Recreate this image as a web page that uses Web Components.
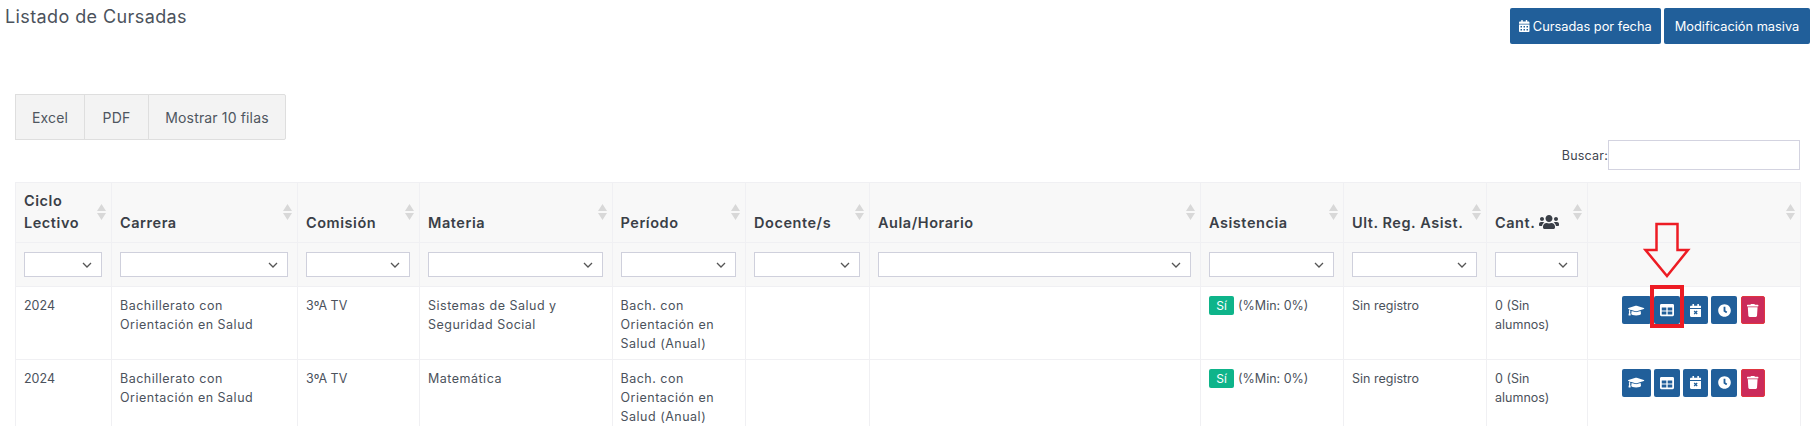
<!DOCTYPE html>
<html lang="es">
<head>
<meta charset="utf-8">
<title>Listado de Cursadas</title>
<style>
  html, body { margin: 0; background: #fff; }
  body { font-family: "Inter", "Open Sans", sans-serif; color: #495057; overflow: hidden; height: 426px; }
</style>
</head>
<body>
<cursadas-page></cursadas-page>

<script>
const ICONS = {
  calendar: '<svg viewBox="0 0 448 512"><path fill="currentColor" d="M0 464c0 26.500 21.500 48 48 48h352c26.500 0 48-21.500 48-48V192H0v272zm320-196c0-6.600 5.400-12 12-12h40c6.600 0 12 5.400 12 12v40c0 6.600-5.400 12-12 12h-40c-6.600 0-12-5.400-12-12v-40zm0 128c0-6.600 5.400-12 12-12h40c6.600 0 12 5.400 12 12v40c0 6.600-5.400 12-12 12h-40c-6.600 0-12-5.400-12-12v-40zM192 268c0-6.600 5.400-12 12-12h40c6.600 0 12 5.400 12 12v40c0 6.600-5.400 12-12 12h-40c-6.600 0-12-5.400-12-12v-40zm0 128c0-6.600 5.400-12 12-12h40c6.600 0 12 5.400 12 12v40c0 6.600-5.400 12-12 12h-40c-6.600 0-12-5.400-12-12v-40zM64 268c0-6.600 5.400-12 12-12h40c6.600 0 12 5.400 12 12v40c0 6.600-5.400 12-12 12H76c-6.600 0-12-5.400-12-12v-40zm0 128c0-6.600 5.400-12 12-12h40c6.600 0 12 5.400 12 12v40c0 6.600-5.400 12-12 12H76c-6.600 0-12-5.400-12-12v-40zM400 64h-48V16c0-8.800-7.200-16-16-16h-32c-8.800 0-16 7.200-16 16v48H160V16c0-8.800-7.200-16-16-16h-32c-8.800 0-16 7.200-16 16v48H48C21.500 64 0 85.500 0 112v48h448v-48c0-26.500-21.500-48-48-48z"/></svg>',
  cap: '<svg viewBox="0 0 640 512"><path fill="currentColor" d="M622.300 153.500 343.400 67.800a76 76 0 0 0-46.800 0L17.700 153.500c-23.600 7.300-23.600 37.700 0 45l48.600 15c-10.700 13.200-17.200 29.400-17.900 47-9.600 5.500-16.400 15.600-16.400 27.500 0 10.800 5.700 19.900 13.900 25.700L20.500 429.200c-2.200 10 5.400 19.500 15.600 19.500h56c10.200 0 17.800-9.500 15.600-19.500L82.300 313.700c8.200-5.800 13.900-14.900 13.900-25.700 0-11.600-6.500-21.300-15.600-26.900.8-15 10.400-28.300 24-34.200l192 59c13.500 4.100 33.300 4.100 46.800 0l279-85.400c23.500-7.300 23.500-37.700-.1-45zM352.800 315.800c-28.500 8.800-52.900 3.900-65.600 0l-145-44.600L128 384c0 35.300 86 64 192 64s192-28.700 192-64l-14.200-112.800-145 44.600z"/></svg>',
  table: '<svg viewBox="0 0 512 512"><path fill="currentColor" d="M464 32H48C21.500 32 0 53.500 0 80v352c0 26.500 21.500 48 48 48h416c26.500 0 48-21.500 48-48V80c0-26.500-21.500-48-48-48zM232 416H64v-108h168v108zm0-140H64V160h168v116zm216 140H280v-108h168v108zm0-140H280V160h168v116z"/></svg>',
  calx: '<svg viewBox="0 0 448 512"><path fill="currentColor" d="M436 160H12c-6.600 0-12-5.400-12-12v-36c0-26.500 21.500-48 48-48h48V12c0-6.600 5.400-12 12-12h40c6.600 0 12 5.400 12 12v52h128V12c0-6.600 5.400-12 12-12h40c6.600 0 12 5.400 12 12v52h48c26.500 0 48 21.500 48 48v36c0 6.600-5.400 12-12 12zM12 192h424c6.600 0 12 5.400 12 12v260c0 26.500-21.500 48-48 48H48c-26.500 0-48-21.500-48-48V204c0-6.600 5.400-12 12-12z"/><path stroke="#215f9a" stroke-width="50" d="M165 275l118 118M283 275L165 393"/></svg>',
  clock: '<svg viewBox="0 0 512 512"><path fill="currentColor" d="M256 8C119 8 8 119 8 256s111 248 248 248 248-111 248-248S393 8 256 8zm57.100 350.100L224.900 294c-3.100-2.300-4.900-5.900-4.900-9.700V116c0-6.600 5.400-12 12-12h48c6.600 0 12 5.400 12 12v137.700l63.500 46.200c5.400 3.900 6.500 11.400 2.600 16.800l-28.200 38.800c-3.900 5.300-11.400 6.500-16.800 2.600z"/></svg>',
  trash: '<svg viewBox="0 0 448 512"><path fill="currentColor" d="M432 32H312l-9.400-18.700A24 24 0 0 0 281.100 0H166.800a23.700 23.700 0 0 0-21.400 13.300L136 32H16A16 16 0 0 0 0 48v32a16 16 0 0 0 16 16h416a16 16 0 0 0 16-16V48a16 16 0 0 0-16-16zM53.200 467a48 48 0 0 0 47.900 45h245.800a48 48 0 0 0 47.900-45L416 128H32z"/></svg>',
  users: '<svg viewBox="0 0 640 512"><path fill="currentColor" d="M96 224c35.300 0 64-28.700 64-64s-28.700-64-64-64-64 28.700-64 64 28.700 64 64 64zm448 0c35.300 0 64-28.700 64-64s-28.700-64-64-64-64 28.700-64 64 28.700 64 64 64zm32 32h-64c-17.600 0-33.500 7.100-45.100 18.600 40.300 22.100 68.900 62 75.100 109.400h66c17.700 0 32-14.300 32-32v-32c0-35.300-28.700-64-64-64zm-256 0c61.900 0 112-50.100 112-112S381.900 32 320 32 208 82.100 208 144s50.100 112 112 112zm76.800 32h-8.300c-20.800 10-43.900 16-68.500 16s-47.600-6-68.500-16h-8.300C179.600 288 128 339.600 128 403.200V432c0 26.500 21.500 48 48 48h288c26.500 0 48-21.500 48-48v-28.800c0-63.600-51.600-115.200-115.200-115.200zm-223.700-13.400C161.500 263.100 145.600 256 128 256H64c-35.300 0-64 28.700-64 64v32c0 17.700 14.300 32 32 32h65.900c6.300-47.400 34.900-87.300 75.200-109.400z"/></svg>'
};

class UiIcon extends HTMLElement {
  connectedCallback() {
    const size = this.getAttribute('size') || '14';
    this.attachShadow({ mode: 'open' }).innerHTML = `
      <style>
        :host { display: inline-flex; align-items: center; justify-content: center; }
        svg { height: ${size}px; display: block; }
      </style>
      ${ICONS[this.getAttribute('name')]}`;
  }
}

class UiButton extends HTMLElement {
  constructor() {
    super();
    this.attachShadow({ mode: 'open' }).innerHTML = `
      <style>
        :host { display: inline-flex; align-items: center; justify-content: center; gap: 3px; box-sizing: border-box;
          height: 36px; background: #215f9a; color: #fff; border-radius: 2px;
          font-size: 12.800px; white-space: nowrap; }
      </style>
      <slot></slot>`;
  }
}

class IconButton extends HTMLElement {
  constructor() {
    super();
    this.attachShadow({ mode: 'open' }).innerHTML = `
      <style>
        :host { display: inline-flex; align-items: center; justify-content: center; box-sizing: border-box;
          height: 28px; background: #215f9a; color: #fff; border-radius: 2px; }
        :host([danger]) { background: #cb2b5a; border: 1px solid #e0353f; }
      </style>
      <slot></slot>`;
  }
}

class ExportBar extends HTMLElement {
  constructor() {
    super();
    this.attachShadow({ mode: 'open' }).innerHTML = `
      <style>
        :host { display: inline-flex; font-size: 14px; letter-spacing: .15px; color: #4e5660; }
        span { box-sizing: border-box; height: 46px; display: flex; align-items: center; justify-content: center;
          background: #f3f3f3; border: 1px solid #dedede; margin-left: -1px; }
        span:first-child { margin-left: 0; border-radius: 2px 0 0 2px; }
        span:last-child { border-radius: 0 2px 2px 0; }
      </style>
      <span style="width:70px">Excel</span><span style="width:65px">PDF</span><span style="width:138px">Mostrar 10 filas</span>`;
  }
}

class SearchBox extends HTMLElement {
  constructor() {
    super();
    this.attachShadow({ mode: 'open' }).innerHTML = `
      <style>
        :host { display: flex; justify-content: flex-end; align-items: center; font-size: 12.500px; letter-spacing: .2px; color: #3f4650; }
        input { box-sizing: border-box; width: 192px; height: 30px; border: 1px solid #d3d3e0; margin: 0; padding: 0 8px; background: #fff; outline: 0; }
      </style>
      <label>Buscar:</label><input type="search">`;
  }
}

class CursadasTable extends HTMLElement {
  constructor() {
    super();
    const cols = [96, 186, 122, 192.500, 133.500, 124, 331, 143, 143, 101, 213];
    const heads = [
      'Ciclo<br>Lectivo', 'Carrera', 'Comisión', 'Materia', 'Período', 'Docente/s', 'Aula/Horario',
      'Asistencia', 'Ult. Reg. Asist.', `Cant. <ui-icon name="users" size="16" class="users"></ui-icon>`, ''
    ];
    const sort = `<svg class="sort" width="9" height="16" viewBox="0 0 9 16"><path fill="#d8d8d8" d="M4.500 0 9 7H0zM0 9h9l-4.500 7z"/></svg>`;
    const chevron = `url("data:image/svg+xml,%3Csvg xmlns='http://www.w3.org/2000/svg' width='10' height='6'%3E%3Cpath fill='none' stroke='%23555' stroke-width='1.300' d='M1 1l4 4 4-4'/%3E%3C/svg%3E")`;
    const row = materia => `
      <tr>
        <td class="tight">2024</td>
        <td>Bachillerato con<br>Orientación en Salud</td>
        <td class="tight">3ºA TV</td>
        <td>${materia}</td>
        <td>Bach. con Orientación en Salud (Anual)</td>
        <td></td>
        <td></td>
        <td><span class="badge">Sí</span> <span class="tight">(%Min: 0%)</span></td>
        <td class="tight">Sin registro</td>
        <td class="tight">0 (Sin alumnos)</td>
        <td class="actions"><div>
          <icon-button style="width:29px"><ui-icon name="cap" size="13"></ui-icon></icon-button>
          <icon-button style="width:26px"><ui-icon name="table" size="14"></ui-icon></icon-button>
          <icon-button style="width:25px"><ui-icon name="calx" size="13"></ui-icon></icon-button>
          <icon-button style="width:26px"><ui-icon name="clock" size="13"></ui-icon></icon-button>
          <icon-button danger style="width:24px; margin-left:1px"><ui-icon name="trash" size="13"></ui-icon></icon-button>
        </div></td>
      </tr>`;
    this.attachShadow({ mode: 'open' }).innerHTML = `
      <style>
        :host { display: block; }
        table { border-collapse: collapse; table-layout: fixed; width: 1785px; font-size: 12.500px; letter-spacing: .5px; color: #4b525c; }
        th, td { border: 1px solid #f0f0f3; padding: 0 9px 0 8px; text-align: left; box-sizing: border-box; }
        thead tr:first-child th { height: 60px; background: #f8f8f8; vertical-align: bottom; padding-bottom: 8px; position: relative;
          font-size: 14.500px; font-weight: 600; letter-spacing: .55px; line-height: 22px; color: #3a3f47; }
        .sort { position: absolute; right: 5px; top: 21px; }
        .users { vertical-align: -2px; color: #3a3f47; }
        .filters th { height: 44px; background: #f8f8f8; }
        select { display: block; box-sizing: border-box; width: 100%; height: 25px; margin: 0; appearance: none; border-radius: 0;
          background: #fff ${chevron} no-repeat right 9px center; border: 1px solid #cfd0dc; }
        td { height: 72.500px; vertical-align: top; padding-top: 9px; line-height: 19px; }
        .tight { letter-spacing: 0; }
        .badge { display: inline-block; background: #0eb48a; color: #fff; border-radius: 2px; width: 25px; text-align: center; font-size: 12px; letter-spacing: 0; line-height: 19px; }
        .actions div { display: flex; justify-content: center; gap: 3px; }
      </style>
      <table>
        <colgroup>${cols.map(w => `<col style="width:${w}px">`).join('')}</colgroup>
        <thead>
          <tr>${heads.map(h => `<th>${h}${sort}</th>`).join('')}</tr>
          <tr class="filters">${cols.map((w, i) => `<th>${i < 10 ? '<select></select>' : ''}</th>`).join('')}</tr>
        </thead>
        <tbody>${row('Sistemas de Salud y Seguridad Social')}${row('Matemática')}</tbody>
      </table>`;
  }
}

class CursadasPage extends HTMLElement {
  constructor() {
    super();
    this.attachShadow({ mode: 'open' }).innerHTML = `
      <style>
        :host { display: block; position: relative; height: 426px; overflow: hidden; }
        header { display: flex; justify-content: space-between; align-items: flex-start; padding: 7px 1px 0 5px; height: 94px; box-sizing: border-box; }
        h1 { margin: 0; font-size: 18px; font-weight: 400; letter-spacing: .4px; line-height: 20px; color: #4b525c; }
        .top { display: flex; gap: 3px; padding-top: 1px; }
        .tools { padding-left: 16px; height: 46px; }
        search-box { margin-right: 11px; height: 30px; }
        .wrap { padding-left: 15px; margin-top: 12px; }
        .arrow { position: absolute; left: 1643px; top: 222px; }
        .mark { position: absolute; left: 1650px; top: 285px; width: 34px; height: 43px; box-sizing: border-box; border: 4px solid #ed1c24; }
      </style>
      <header>
        <h1>Listado de Cursadas</h1>
        <div class="top">
          <ui-button style="width:151px"><ui-icon name="calendar" size="12"></ui-icon>Cursadas por fecha</ui-button>
          <ui-button style="width:146px">Modificación masiva</ui-button>
        </div>
      </header>
      <div class="tools"><export-bar></export-bar></div>
      <search-box></search-box>
      <div class="wrap"><cursadas-table></cursadas-table></div>
      <svg class="arrow" width="48" height="56" viewBox="0 0 48 56"><path fill="none" stroke="#ed1c24" stroke-width="2.500" d="M13.500 2h21v26H45L24 54 2.500 28h11z"/></svg>
      <div class="mark"></div>`;
  }
}

customElements.define('ui-icon', UiIcon);
customElements.define('ui-button', UiButton);
customElements.define('icon-button', IconButton);
customElements.define('export-bar', ExportBar);
customElements.define('search-box', SearchBox);
customElements.define('cursadas-table', CursadasTable);
customElements.define('cursadas-page', CursadasPage);
</script>
</body>
</html>
